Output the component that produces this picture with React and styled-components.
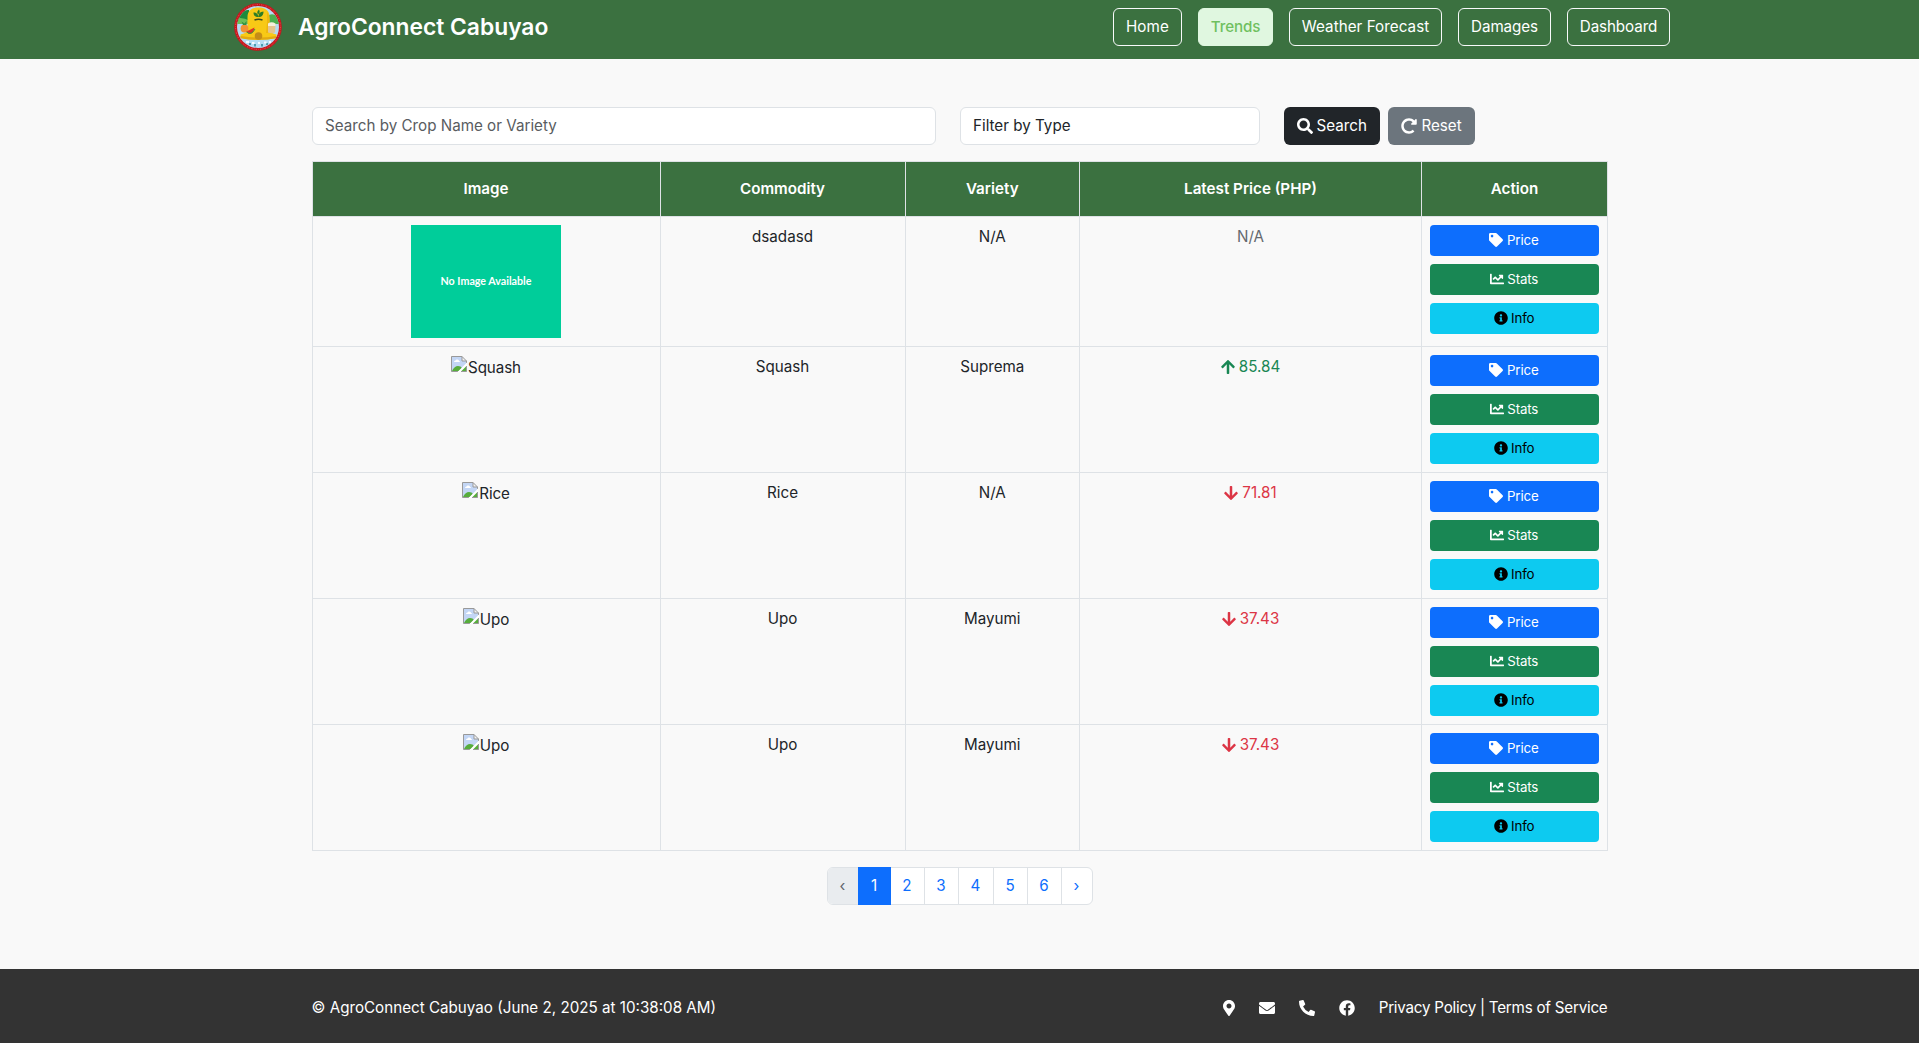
import React from "react";
import styled, { createGlobalStyle } from "styled-components";
import {
  FaSearch, FaRedoAlt, FaTag, FaChartLine, FaInfoCircle, FaArrowUp, FaArrowDown,
  FaMapMarkerAlt, FaEnvelope, FaPhoneAlt, FaFacebook,
} from "react-icons/fa";

const GREEN = "#3b7140";
const LINE = "#dee2e6";

const GlobalStyle = createGlobalStyle`
  *, *::before, *::after { box-sizing: border-box; }
  body {
    margin: 0;
    background: #f9f9f9;
    color: #212529;
    font-family: Inter, "Liberation Sans", sans-serif;
    font-size: 15.2px;
    line-height: 24px;
  }
  svg { display: block; flex: none; }
`;

const Page = styled.div`
  display: flex;
  flex-direction: column;
  height: 1043px;
  overflow: hidden;
`;

const Navbar = styled.header`
  display: flex;
  align-items: center;
  justify-content: space-between;
  height: 59px;
  padding: 0 249px 5px 234px;
  background: ${GREEN};
`;

const Brand = styled.div`
  display: flex;
  align-items: center;
  gap: 16px;
  color: #fff;
  font-size: 22.8px;
  font-weight: 600;
  white-space: nowrap;
`;

const NavLinks = styled.nav`
  display: flex;
  gap: 16px;
`;

const NavLink = styled.a`
  display: flex;
  align-items: center;
  justify-content: center;
  width: ${(p) => p.$width}px;
  height: 38px;
  border: 1px solid ${(p) => (p.$active ? "#e0f7e0" : "#f8f9fa")};
  border-radius: 6px;
  background: ${(p) => (p.$active ? "#e0f7e0" : "transparent")};
  color: ${(p) => (p.$active ? "#6fc05f" : "#fff")};
  font-weight: ${(p) => (p.$active ? 500 : 400)};
  letter-spacing: ${(p) => p.$tracking || 0}px;
  white-space: nowrap;
`;

const Main = styled.main`
  width: 1296px;
  margin: 0 auto;
  padding-top: 48px;
  flex: 1;
`;

const Filters = styled.form`
  display: flex;
  gap: 24px;
  margin-bottom: 16px;
`;

const Field = styled.div`
  width: ${(p) => p.$width}px;
  height: 38px;
  padding: 6px 12.5px;
  border: 1px solid ${LINE};
  border-radius: 6px;
  background: #fff;
  color: ${(p) => (p.$muted ? "#595c5f" : "#212529")};
`;

const FilterActions = styled.div`
  display: flex;
  gap: 8px;
`;

const FilterButton = styled.button`
  display: flex;
  align-items: center;
  justify-content: center;
  gap: 4px;
  width: ${(p) => p.$width}px;
  height: 38px;
  padding: 0;
  border: 0;
  border-radius: 6px;
  background: ${(p) => p.$color};
  color: #fff;
  font: inherit;
`;

const Table = styled.table`
  width: 1295.5px;
  table-layout: fixed;
  border-collapse: collapse;
  text-align: center;
`;

const Col = styled.col`
  width: ${(p) => p.$width}px;
`;

const HeadRow = styled.tr`
  height: 55px;
  background: ${GREEN};
  color: #fff;
`;

const HeadCell = styled.th`
  padding: 0 8px;
  border: 1px solid ${LINE};
  font-weight: 600;
`;

const BodyRow = styled.tr`
  height: ${(p) => p.$height}px;
`;

const Cell = styled.td`
  padding: 8px;
  border: 1px solid ${LINE};
  vertical-align: top;
  color: ${(p) => (p.$muted ? "#64696e" : "inherit")};
`;

const Placeholder = styled.div`
  display: flex;
  align-items: center;
  justify-content: center;
  width: 150px;
  height: 113px;
  margin: 0 auto;
  padding-bottom: 2px;
  background: #00cd9a;
  color: #fff;
  font-family: Lato, sans-serif;
  font-size: 10.7px;
  font-weight: 700;
`;

const MissingImage = styled.div`
  display: flex;
  justify-content: center;
  gap: 1px;
  padding-top: 1px;
  letter-spacing: -0.1px;
`;

const PriceValue = styled.div`
  display: flex;
  align-items: center;
  justify-content: center;
  gap: 4px;
  color: ${(p) => (p.$up ? "#198754" : "#dc3545")};

  svg { width: 14px; }
`;

const Actions = styled.div`
  display: flex;
  flex-direction: column;
  gap: 8px;
`;

const ActionButton = styled.button`
  display: flex;
  align-items: center;
  justify-content: center;
  gap: 3.5px;
  height: 31px;
  padding: 0 1px 2px 0;
  border: 0;
  border-radius: 4px;
  background: ${(p) => p.$color};
  color: ${(p) => (p.$dark ? "#000" : "#fff")};
  font: inherit;
  font-size: 13.3px;
  letter-spacing: -0.15px;
`;

const Pagination = styled.nav`
  display: flex;
  width: 266px;
  height: 38px;
  margin: 16px auto 0;
  border: 1px solid ${LINE};
  border-radius: 6px;
  background: #fff;
`;

const PageLink = styled.a`
  display: flex;
  align-items: center;
  justify-content: center;
  width: ${(p) => p.$width}px;
  margin: ${(p) => (p.$active ? "-1px 0" : "0")};
  border-left: ${(p) => (p.$divided ? `1px solid ${LINE}` : "0")};
  border-radius: ${(p) => (p.$disabled ? "5px 0 0 5px" : "0")};
  background: ${(p) => (p.$active ? "#0d6efd" : p.$disabled ? "#e9ecef" : "transparent")};
  color: ${(p) => (p.$active ? "#fff" : p.$disabled ? "#5f656a" : "#0d6efd")};
`;

const Footer = styled.footer`
  height: 74px;
  padding-top: 27px;
  background: #333;
  color: #fff;
`;

const FooterInner = styled.div`
  display: flex;
  align-items: center;
  justify-content: space-between;
  width: 1296px;
  height: 24px;
  margin: 0 auto;
  white-space: nowrap;
`;

const FooterLinks = styled.div`
  display: flex;
  align-items: center;
  gap: 24px;
`;

const PinIcon = styled(FaMapMarkerAlt)`
  width: 12px;
`;

const Legal = styled.span`
  letter-spacing: -0.23px;
`;

const SealArt = () => (
  <svg width="48" height="48" viewBox="0 0 48 48">
    <defs>
      <clipPath id="seal"><circle cx="24" cy="24" r="21" /></clipPath>
    </defs>
    <circle cx="24" cy="24" r="23.8" fill="#c8141a" />
    <circle cx="24" cy="24" r="22.4" fill="none" stroke="#e5878a" strokeWidth="0.9" strokeDasharray="1.4 1.1 0.7 1.3" opacity="0.6" />
    <g clipPath="url(#seal)">
      <rect width="48" height="48" fill="#b5dcf3" />
      <path d="M0 19Q6 6 15 7V19Z" fill="#1d8a3c" />
      <path d="M33 13Q40 8 48 17V21H33Z" fill="#4cae4f" />
      <path d="M0 16Q8 13 16 18V21H0Z" fill="#6abf58" />
      <path d="M13.500 28V14C13.500 7 18 4.500 24.500 4.500S35.500 7 35.500 14V28Q37 30 42.500 31.500V35Q34 37 24.500 37T6.500 35V31.500Q12 30 13.500 28Z" fill="#f8c916" />
      <path d="M6.500 33Q24 36 42.500 33V35.200Q24 38.500 6.500 35.200Z" fill="#e2a912" />
      <path d="M33 9Q35.500 12 35.500 16V28L38 30H32Q33.500 20 33 9Z" fill="#eeb60f" />
      <circle cx="24.500" cy="33" r="3.800" fill="#c48c17" />
      <path d="M24.500 14C20.500 14 19.500 12 19.500 9.500C22.500 9.500 24 11 24.500 14ZM24.500 14C24.500 10 26 9 29.500 8.500C29.500 12 28 14 24.500 14ZM24 11.500C22.500 9.500 23.500 8 25 6.500C26 8.500 26 10 24 11.500Z" fill="#2e7d26" />
      <path d="M20.500 17Q24.500 15.500 28.500 17" fill="none" stroke="#3e4a1c" strokeWidth="1.600" />
      <circle cx="10.500" cy="25.500" r="3.900" fill="#f29133" />
      <path d="M9 22L7.500 18.500L10.500 20.500L12.500 18L12.500 22Z" fill="#319142" />
      <path d="M12.500 28.500L20.500 24.500Q20 31 14.500 30.800Z" fill="#e03427" />
      <path d="M12.500 29Q17.500 33 21 26" fill="none" stroke="#3b9c3d" strokeWidth="1" />
      <path d="M34 21.500H41.500L41 29.500Q37.500 31 34 29.500Z" fill="#e6c48d" />
      <path d="M34 20.500Q37.500 18 41.500 20.500V23H34Z" fill="#f6efdc" />
      <path d="M15 40h2v2h-2zM20 41h2v2.500h-2zM27 41h2v2.500h-2zM32 40h2v2h-2z" fill="#4b9cae" />
      <path d="M12 38h3v2h-3zM18 39h2.500v2h-2.500zM24 39h2v2h-2zM30 38.500h2.500v2h-2.500zM35 38h2v2h-2z" fill="#f3fbff" />
    </g>
  </svg>
);

const BrokenImage = () => (
  <svg width="16" height="16" viewBox="0 0 16 16">
    <path d="M0.5 0.5H11L15.5 5V8L7 15.5H0.5Z" fill="#c3d6f5" />
    <path d="M3 6Q3 4.500 4.500 4.500Q5 3 6.500 3.500Q8 3.500 8 5Q9 5 9 6Z" fill="#fff" />
    <path d="M1 15Q3.500 10 7 10Q10 10 11 12L8 15Z" fill="#57ad3c" />
    <path d="M11 0.500V5H15.500Z" fill="#f4f4f4" />
    <path d="M0.500 15.500V0.500H11L15.500 5V7M11 0.500V5H15.500M0.500 15.500H7" fill="none" stroke="#999" />
    <path d="M16 6.500L6.500 16H9.500L16 10Z" fill="#fff" />
    <path d="M15.500 10L10 15.500H15.500Z" fill="#57ad3c" />
    <path d="M15.500 10V15.500H10" fill="none" stroke="#999" />
  </svg>
);

const nav = [
  { label: "Home", width: 69, tracking: 0.15 },
  { label: "Trends", width: 75, active: true, tracking: -0.15 },
  { label: "Weather Forecast", width: 153, tracking: 0.05 },
  { label: "Damages", width: 93, tracking: -0.1 },
  { label: "Dashboard", width: 103, tracking: -0.1 },
];

const columns = [
  { label: "Image", width: 348 },
  { label: "Commodity", width: 245 },
  { label: "Variety", width: 174.5 },
  { label: "Latest Price (PHP)", width: 342 },
  { label: "Action", width: 186 },
];

const crops = [
  { name: "dsadasd", variety: "N/A", placeholder: true },
  { name: "Squash", variety: "Suprema", price: "85.84", up: true },
  { name: "Rice", variety: "N/A", price: "71.81" },
  { name: "Upo", variety: "Mayumi", price: "37.43" },
  { name: "Upo", variety: "Mayumi", price: "37.43" },
];

const pages = [
  { label: "‹", width: 30, disabled: true },
  { label: "1", width: 33, active: true },
  { label: "2", width: 33 },
  { label: "3", width: 34, divided: true },
  { label: "4", width: 35, divided: true },
  { label: "5", width: 34, divided: true },
  { label: "6", width: 34, divided: true },
  { label: "›", width: 31, divided: true },
];

const CropRow = ({ crop }) => (
  <BodyRow $height={crop.placeholder ? 130 : 126}>
    <Cell>
      {crop.placeholder ? (
        <Placeholder>No Image Available</Placeholder>
      ) : (
        <MissingImage><BrokenImage /><span>{crop.name}</span></MissingImage>
      )}
    </Cell>
    <Cell>{crop.name}</Cell>
    <Cell>{crop.variety}</Cell>
    <Cell $muted={!crop.price}>
      {crop.price ? (
        <PriceValue $up={crop.up}>
          {crop.up ? <FaArrowUp size={16} /> : <FaArrowDown size={16} />}
          <span>{crop.price}</span>
        </PriceValue>
      ) : "N/A"}
    </Cell>
    <Cell>
      <Actions>
        <ActionButton $color="#0d6efd"><FaTag size={14} /><span>Price</span></ActionButton>
        <ActionButton $color="#198754"><FaChartLine size={14} /><span>Stats</span></ActionButton>
        <ActionButton $color="#0dcaf0" $dark><FaInfoCircle size={14} /><span>Info</span></ActionButton>
      </Actions>
    </Cell>
  </BodyRow>
);

export default function App() {
  return (
    <Page>
      <GlobalStyle />
      <Navbar>
        <Brand><SealArt /><span>AgroConnect Cabuyao</span></Brand>
        <NavLinks>
          {nav.map((n) => (
            <NavLink key={n.label} $width={n.width} $active={n.active} $tracking={n.tracking}>{n.label}</NavLink>
          ))}
        </NavLinks>
      </Navbar>
      <Main>
        <Filters>
          <Field $width={624} $muted>Search by Crop Name or Variety</Field>
          <Field $width={300}>Filter by Type</Field>
          <FilterActions>
            <FilterButton type="button" $width={96.5} $color="#212529"><FaSearch size={16} /><span>Search</span></FilterButton>
            <FilterButton type="button" $width={87} $color="#6c757d"><FaRedoAlt size={16} /><span>Reset</span></FilterButton>
          </FilterActions>
        </Filters>
        <Table>
          <colgroup>{columns.map((c) => <Col key={c.label} $width={c.width} />)}</colgroup>
          <thead>
            <HeadRow>{columns.map((c) => <HeadCell key={c.label}>{c.label}</HeadCell>)}</HeadRow>
          </thead>
          <tbody>{crops.map((c, i) => <CropRow key={i} crop={c} />)}</tbody>
        </Table>
        <Pagination>
          {pages.map((p) => (
            <PageLink key={p.label} $width={p.width} $active={p.active} $disabled={p.disabled} $divided={p.divided}>{p.label}</PageLink>
          ))}
        </Pagination>
      </Main>
      <Footer>
        <FooterInner>
          <span>© AgroConnect Cabuyao (June 2, 2025 at 10:38:08 AM)</span>
          <FooterLinks>
            <PinIcon size={16} />
            <FaEnvelope size={16} />
            <FaPhoneAlt size={16} />
            <FaFacebook size={16} />
            <Legal>Privacy Policy | Terms of Service</Legal>
          </FooterLinks>
        </FooterInner>
      </Footer>
    </Page>
  );
}
